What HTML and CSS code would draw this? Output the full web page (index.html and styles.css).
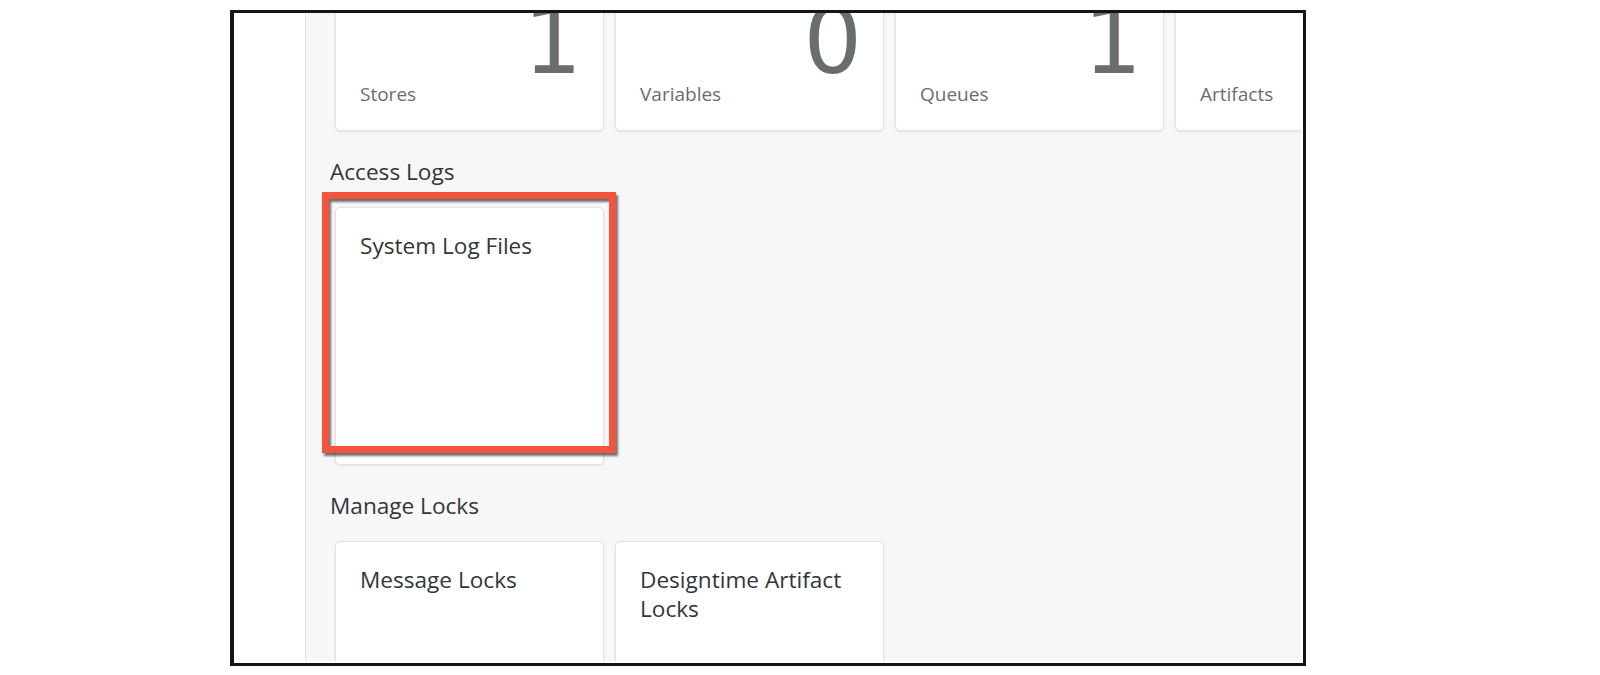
FILE: index.html
```html
<!DOCTYPE html>
<html lang="en">
<head>
<meta charset="utf-8">
<title>Monitor</title>
<link rel="stylesheet" href="styles.css">
</head>
<body>
<div class="frame">
  <aside class="sidebar"></aside>
  <main class="content">
    <section class="row row-first">
      <div class="tile tile-count">
        <div class="count">1</div>
        <div class="label">Stores</div>
      </div>
      <div class="tile tile-count">
        <div class="count">0</div>
        <div class="label">Variables</div>
      </div>
      <div class="tile tile-count">
        <div class="count">1</div>
        <div class="label">Queues</div>
      </div>
      <div class="tile tile-count">
        <div class="count"></div>
        <div class="label">Artifacts</div>
      </div>
    </section>

    <h2 class="group-title">Access Logs</h2>
    <section class="row">
      <div class="tile tile-marked">
        <div class="tile-title">System Log Files</div>
        <div class="highlight"></div>
      </div>
    </section>

    <h2 class="group-title">Manage Locks</h2>
    <section class="row">
      <div class="tile">
        <div class="tile-title">Message Locks</div>
      </div>
      <div class="tile">
        <div class="tile-title">Designtime Artifact Locks</div>
      </div>
    </section>
  </main>
</div>
</body>
</html>
```

FILE: styles.css
```css
html, body {
  margin: 0;
  padding: 0;
  background: #ffffff;
}

body {
  font-family: "Open Sans", "Noto Sans", sans-serif;
  color: #32363a;
}

.frame {
  box-sizing: border-box;
  margin: 10px 0 0 230px;
  width: 1076px;
  height: 656px;
  border: 3px solid #141414;
  border-left-width: 4px;
  padding: 0 2px 2px 0;
  background: #ffffff;
  display: flex;
  overflow: hidden;
}

.sidebar {
  flex: 0 0 71px;
  background: #ffffff;
  border-right: 1px solid #e3e3e3;
}

.content {
  flex: 1 1 auto;
  min-width: 0;
  background: #f7f7f7;
  padding-left: 24px;
  overflow: hidden;
}

.row {
  display: flex;
  gap: 11px;
  margin-left: 5px;
}

.row-first {
  margin-top: -140px;
}

.tile {
  box-sizing: border-box;
  position: relative;
  flex: 0 0 269px;
  height: 258px;
  background: #ffffff;
  border: 1px solid #e2e2e2;
  border-radius: 5px;
  box-shadow: 0 1px 3px rgba(0, 0, 0, 0.08);
  padding: 23px 25px 0 24px;
}

.tile-count {
  display: flex;
  flex-direction: column;
  justify-content: flex-end;
  padding: 0 21px 24px 24px;
}

.count {
  font-family: "DejaVu Sans", sans-serif;
  font-size: 92px;
  line-height: 80px;
  height: 80px;
  text-align: right;
  color: #6a6d70;
}

.label {
  font-size: 19px;
  line-height: 24px;
  margin-top: 0;
  color: #6a6d70;
}

.tile-title {
  font-size: 22.6px;
  line-height: 29px;
  color: #32363a;
}

.group-title {
  margin: 27px 0 21px 0;
  font-size: 22.6px;
  line-height: 28px;
  font-weight: 400;
  color: #32363a;
}

.highlight {
  position: absolute;
  left: -14px;
  top: -16px;
  width: 294px;
  height: 261px;
  box-sizing: border-box;
  border: 7px solid #f3533f;
  filter: drop-shadow(2px 3px 1px rgba(0, 0, 0, 0.55));
}
```
